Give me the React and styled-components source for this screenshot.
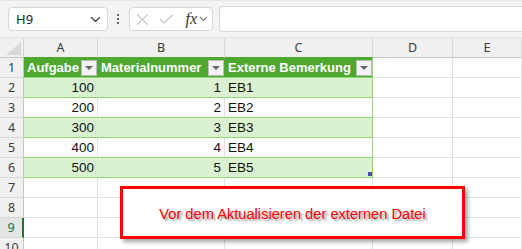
import styled, { createGlobalStyle } from "styled-components";

const Global = createGlobalStyle`
  html, body {
    margin: 0;
    padding: 0;
    overflow: hidden;
    background: #ffffff;
  }
`;

const Page = styled.div`
  width: 522px;
  height: 249px;
  overflow: hidden;
  font-family: "Liberation Sans", Arial, sans-serif;
`;

const Toolbar = styled.div`
  display: flex;
  align-items: center;
  height: 38px;
  padding: 0 0 0 8px;
  box-sizing: border-box;
  background: #f3f3f3;
  border-top: 1px solid #e6e6e6;
  border-bottom: 1px solid #e2e2e2;
`;

const NameBox = styled.div`
  display: flex;
  align-items: center;
  justify-content: space-between;
  width: 100px;
  height: 24px;
  box-sizing: border-box;
  padding: 0 6px 0 7px;
  background: #fff;
  border: 1px solid #d6d6d6;
  border-radius: 4px;
  font-family: "Noto Sans", "Open Sans", sans-serif;
  font-size: 13px;
  color: #222;
`;

const Kebab = styled.div`
  display: flex;
  flex-direction: column;
  gap: 2px;
  margin: 0 10px 0 9px;
  span {
    width: 2px;
    height: 2px;
    background: #333;
    border-radius: 1px;
  }
`;

const FxBox = styled.div`
  display: flex;
  align-items: center;
  width: 84px;
  height: 24px;
  box-sizing: border-box;
  padding: 0 4px 0 6px;
  gap: 10px;
  background: #fff;
  border: 1px solid #d6d6d6;
  border-radius: 4px;
`;

const Fx = styled.span`
  font-family: "Liberation Serif", serif;
  font-style: italic;
  font-size: 16px;
  color: #333;
  margin-left: 2px;
  margin-right: -8px;
`;

const FormulaInput = styled.div`
  flex: 1;
  height: 24px;
  margin-left: 6px;
  background: #fff;
  border: 1px solid #d6d6d6;
  border-right: none;
  border-radius: 4px 0 0 4px;
`;

const Sheet = styled.div`
  position: relative;
  display: grid;
  grid-template-columns: 24px 74px 127px 148px 80px 1fr;
  grid-auto-rows: 20px;
  font-family: "Liberation Sans", Arial, sans-serif;
  font-size: 13.5px;
`;

const Corner = styled.div`
  position: relative;
  background: #f0f0f0;
  border-right: 1px solid #d4d4d4;
  border-bottom: 1px solid #c4c4c4;
  box-sizing: border-box;
  svg {
    position: absolute;
    right: 2px;
    bottom: 2px;
  }
`;

const ColHeader = styled.div`
  display: flex;
  align-items: center;
  justify-content: center;
  background: #f0f0f0;
  border-right: 1px solid #d8d8d8;
  border-bottom: 1px solid ${(p) => (p.$table ? "#4ea72e" : "#c4c4c4")};
  box-sizing: border-box;
  font-family: "Noto Sans", "Open Sans", sans-serif;
  font-size: 12.5px;
  color: #3a3a3a;
`;

const RowHeader = styled.div`
  display: flex;
  align-items: center;
  justify-content: center;
  background: ${(p) => (p.$selected ? "#e4e4e4" : "#f0f0f0")};
  border-right: ${(p) => (p.$selected ? "2px solid #1e7145" : "1px solid #c4c4c4")};
  border-bottom: 1px solid #d8d8d8;
  box-sizing: border-box;
  font-family: "Noto Sans", "Open Sans", sans-serif;
  font-size: 12.5px;
  color: ${(p) => (p.$selected ? "#1e7145" : "#3a3a3a")};
`;

const fills = {
  head: "#4ea72e",
  band: "#daf2d0",
  plain: "#ffffff",
  none: "#ffffff",
};

const Cell = styled.div`
  display: flex;
  align-items: center;
  justify-content: ${(p) => (p.$align === "right" ? "flex-end" : "flex-start")};
  gap: 2px;
  padding: 0 3px;
  box-sizing: border-box;
  overflow: hidden;
  white-space: nowrap;
  background: ${(p) => fills[p.$kind]};
  color: ${(p) => (p.$kind === "head" ? "#ffffff" : "#111")};
  font-weight: ${(p) => (p.$kind === "head" ? 700 : 400)};
  font-size: ${(p) => (p.$kind === "head" ? "13px" : "13.5px")};
  border-bottom: 1px solid
    ${(p) => (p.$kind === "none" ? "#e1e1e1" : "#8ed973")};
  border-right: 1px solid
    ${(p) =>
      p.$edge
        ? "#8ed973"
        : p.$kind === "head"
        ? "#4ea72e"
        : p.$kind === "band"
        ? "#daf2d0"
        : "#e1e1e1"};
  ${(p) => (p.$kind === "head" ? "padding-right: 0;" : "")}
`;

const HeadLabel = styled.span`
  flex: 1;
  overflow: hidden;
`;

const FilterButton = styled.div`
  flex-shrink: 0;
  display: flex;
  align-items: center;
  justify-content: center;
  width: 16px;
  height: 16px;
  box-sizing: border-box;
  background: #f2f2f2;
  border: 1px solid #bcbcbc;
  &::after {
    content: "";
    border-left: 4px solid transparent;
    border-right: 4px solid transparent;
    border-top: 4px solid #666;
  }
`;

const Handle = styled.div`
  position: absolute;
  left: 368px;
  top: 134px;
  width: 4px;
  height: 4px;
  background: #4c4cb0;
`;

const Callout = styled.div`
  position: absolute;
  left: 120px;
  top: 148px;
  width: 345px;
  height: 53px;
  box-sizing: border-box;
  display: flex;
  align-items: center;
  justify-content: center;
  background: #ffffff;
  border: 3px solid #ff0000;
  box-shadow: 3px 3px 4px rgba(0, 0, 0, 0.35);
  font-family: "Liberation Sans", Arial, sans-serif;
  font-size: 14.67px;
  color: #ff0000;
  text-shadow: 2px 2px 2px rgba(0, 0, 0, 0.4);
  padding-top: 2px;
`;

const Chevron = ({ size = 10, color = "#444" }) => (
  <svg width={size} height={size * 0.6} viewBox="0 0 10 6" fill="none">
    <path d="M1 1l4 4 4-4" stroke={color} strokeWidth="1.2" />
  </svg>
);

const columns = ["A", "B", "C", "D", "E"];
const headers = ["Aufgabe", "Materialnummer", "Externe Bemerkung"];
const data = [
  [100, 1, "EB1"],
  [200, 2, "EB2"],
  [300, 3, "EB3"],
  [400, 4, "EB4"],
  [500, 5, "EB5"],
];

export default function App() {
  const rows = [];
  for (let r = 1; r <= 10; r++) {
    rows.push(
      <RowHeader key={`h${r}`} $selected={r === 9}>
        {r}
      </RowHeader>
    );
    if (r === 1) {
      headers.forEach((h, i) =>
        rows.push(
          <Cell key={`c1${i}`} $kind="head" $edge={i === 2}>
            <HeadLabel>{h}</HeadLabel>
            <FilterButton />
          </Cell>
        )
      );
    } else if (r <= 6) {
      const d = data[r - 2];
      const kind = r % 2 === 0 ? "band" : "plain";
      rows.push(
        <Cell key={`a${r}`} $kind={kind} $align="right">{d[0]}</Cell>,
        <Cell key={`b${r}`} $kind={kind} $align="right">{d[1]}</Cell>,
        <Cell key={`c${r}`} $kind={kind} $edge>{d[2]}</Cell>
      );
    } else {
      for (let i = 0; i < 3; i++) rows.push(<Cell key={`e${r}${i}`} $kind="none" />);
    }
    rows.push(<Cell key={`d${r}`} $kind="none" />, <Cell key={`f${r}`} $kind="none" />);
  }

  return (
    <Page>
      <Global />
      <Toolbar>
        <NameBox>
          <span>H9</span>
          <Chevron size={11} color="#333" />
        </NameBox>
        <Kebab>
          <span />
          <span />
          <span />
        </Kebab>
        <FxBox>
          <svg width="13" height="13" viewBox="0 0 13 13">
            <path d="M1 1l11 11M12 1L1 12" stroke="#c4c4c4" strokeWidth="1.2" />
          </svg>
          <svg width="15" height="12" viewBox="0 0 15 12">
            <path d="M1 6l4 4 9-8" stroke="#c4c4c4" strokeWidth="1.2" fill="none" />
          </svg>
          <Fx>fx</Fx>
          <Chevron size={9} color="#777" />
        </FxBox>
        <FormulaInput />
      </Toolbar>
      <Sheet>
        <Corner>
          <svg width="15" height="13" viewBox="0 0 15 13">
            <path d="M15 0V13H0z" fill="#d9d9d9" />
          </svg>
        </Corner>
        {columns.map((c, i) => (
          <ColHeader key={c} $table={i < 3}>
            {c}
          </ColHeader>
        ))}
        {rows}
        <Handle />
        <Callout>Vor dem Aktualisieren der externen Datei</Callout>
      </Sheet>
    </Page>
  );
}
